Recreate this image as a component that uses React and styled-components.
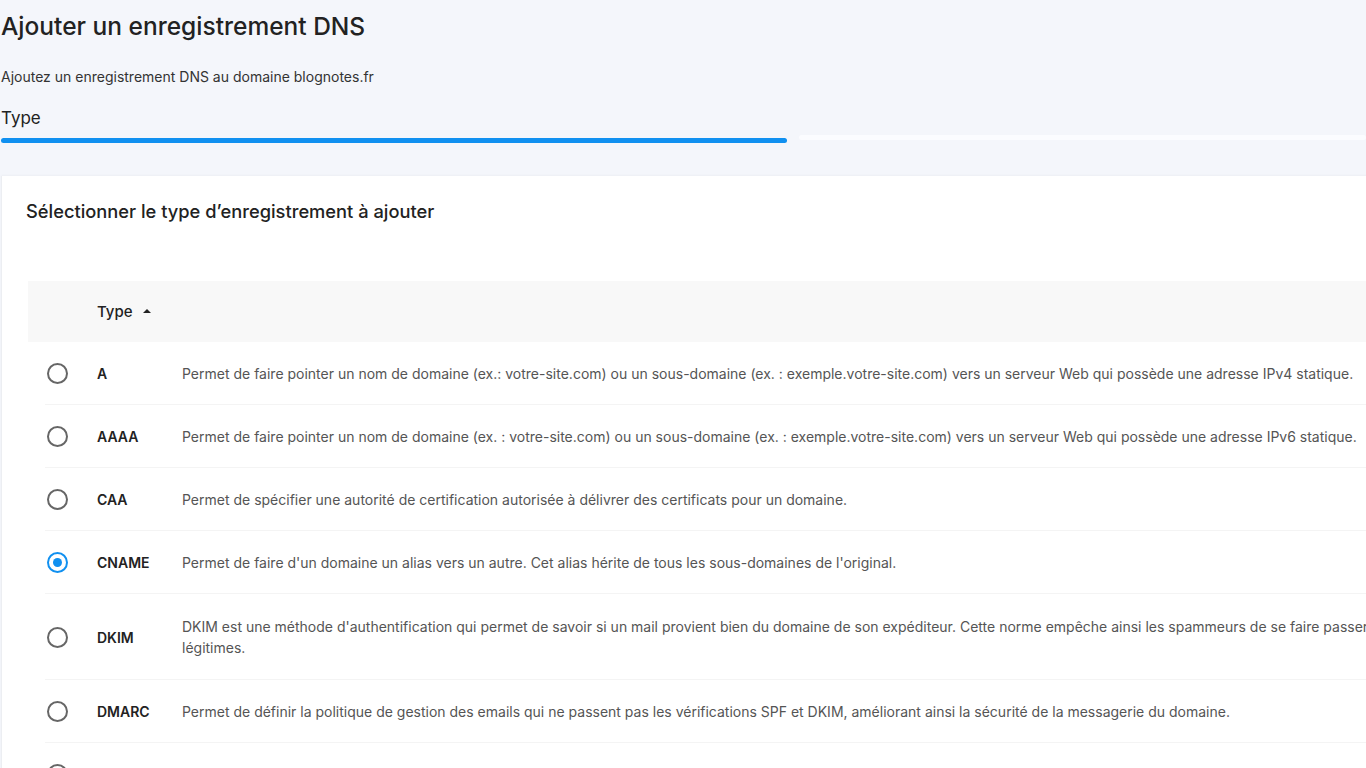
import styled, { createGlobalStyle } from 'styled-components';

const GlobalStyle = createGlobalStyle`
	html, body {
		margin: 0;
		padding: 0;
		background: #f4f6fb;
		overflow: hidden;
		font-family: Inter, 'Noto Sans', sans-serif;
		color: #222;
	}
`;

const Page = styled.div`
	width: 1640px;
	padding: 0 0 0 1px;
`;

const Title = styled.h1`
	margin: 0;
	padding-top: 11px;
	font-size: 24.5px;
	font-weight: 500;
	line-height: 30px;
	color: #222;
`;

const Subtitle = styled.p`
	margin: 27px 0 0 0;
	font-size: 14px;
	line-height: 18px;
	color: #333;
`;

const StepLabel = styled.div`
	margin-top: 20px;
	font-size: 17px;
	line-height: 24px;
	color: #222;
`;

const Progress = styled.div`
	margin-top: 5px;
	width: 1365px;
	display: flex;
	align-items: center;
	gap: 12px;
`;

const Bar = styled.div`
	height: 5px;
	border-radius: 3px;
	background: ${props => (props.active ? '#1090f0' : '#fbfcff')};
	flex: ${props => (props.active ? '0 0 786px' : '1')};
	margin-top: ${props => (props.active ? '3px' : '-3px')};
`;

const Card = styled.section`
	margin-top: 33px;
	background: #fff;
	border-left: 1px solid #eceef2;
	box-shadow: 0 -1px 2px rgba(0, 0, 0, 0.03);
	padding: 25px 0 0 24px;
	min-height: 600px;
`;

const CardTitle = styled.h2`
	margin: 0;
	font-size: 18.3px;
	font-weight: 500;
	line-height: 20px;
	color: #222;
`;

const Table = styled.div`
	margin-top: 60px;
	margin-left: 2px;
`;

const Grid = styled.div`
	display: grid;
	grid-template-columns: 69px 85px 1365px;
	align-items: center;
	min-height: ${props => props.h || 63}px;
	background: ${props => (props.head ? '#f8f8f8' : 'transparent')};
	position: relative;
	&:not(:first-child)::after {
		content: '';
		position: absolute;
		left: 17px;
		right: 0;
		bottom: 0;
		height: 1px;
		background: #f4f4f4;
	}
`;

const HeadCell = styled.div`
	grid-column: 2 / 4;
	display: flex;
	align-items: center;
	gap: 10px;
	font-size: 15px;
	font-weight: 500;
	color: #222;
`;

const SortArrow = styled.span`
	width: 0;
	height: 0;
	border-left: 4px solid transparent;
	border-right: 4px solid transparent;
	border-bottom: 4px solid #222;
	margin-top: -1px;
`;

const RadioCell = styled.div`
	padding-left: 19px;
	display: flex;
	align-items: center;
`;

const RadioRing = styled.span`
	box-sizing: border-box;
	width: 21px;
	height: 21px;
	border-radius: 50%;
	border: 2px solid ${props => (props.selected ? '#1090f0' : '#666')};
	display: flex;
	align-items: center;
	justify-content: center;
`;

const RadioDot = styled.span`
	width: 9px;
	height: 9px;
	border-radius: 50%;
	background: #1090f0;
`;

const TypeCell = styled.div`
	font-size: 14px;
	font-weight: 600;
	color: #222;
`;

const DescCell = styled.div`
	font-size: 14px;
	line-height: 21px;
	color: #555;
	padding: 10px 0;
`;

const records = [
	{
		type: 'A',
		desc: 'Permet de faire pointer un nom de domaine (ex.: votre-site.com) ou un sous-domaine (ex. : exemple.votre-site.com) vers un serveur Web qui possède une adresse IPv4 statique.',
	},
	{
		type: 'AAAA',
		desc: 'Permet de faire pointer un nom de domaine (ex. : votre-site.com) ou un sous-domaine (ex. : exemple.votre-site.com) vers un serveur Web qui possède une adresse IPv6 statique.',
	},
	{
		type: 'CAA',
		desc: 'Permet de spécifier une autorité de certification autorisée à délivrer des certificats pour un domaine.',
	},
	{
		type: 'CNAME',
		desc: "Permet de faire d'un domaine un alias vers un autre. Cet alias hérite de tous les sous-domaines de l'original.",
	},
	{
		type: 'DKIM',
		h: 86,
		desc: "DKIM est une méthode d'authentification qui permet de savoir si un mail provient bien du domaine de son expéditeur. Cette norme empêche ainsi les spammeurs de se faire passer pour des expéditeurs légitimes.",
	},
	{
		type: 'DMARC',
		desc: 'Permet de définir la politique de gestion des emails qui ne passent pas les vérifications SPF et DKIM, améliorant ainsi la sécurité de la messagerie du domaine.',
	},
	{
		type: 'MX',
		desc: 'Permet de définir les serveurs de messagerie qui reçoivent les emails du domaine.',
	},
];

const Radio = ({ selected }) => (
	<RadioRing selected={selected}>{selected && <RadioDot />}</RadioRing>
);

const App = () => {
	const selected = 'CNAME';
	return (
		<Page>
			<GlobalStyle />
			<Title>Ajouter un enregistrement DNS</Title>
			<Subtitle>Ajoutez un enregistrement DNS au domaine blognotes.fr</Subtitle>
			<StepLabel>Type</StepLabel>
			<Progress>
				<Bar active />
				<Bar />
			</Progress>
			<Card>
				<CardTitle>Sélectionner le type d’enregistrement à ajouter</CardTitle>
				<Table>
					<Grid head h={61}>
						<HeadCell>
							Type <SortArrow />
						</HeadCell>
					</Grid>
					{records.map(r => (
						<Grid key={r.type} h={r.h}>
							<RadioCell>
								<Radio selected={r.type === selected} />
							</RadioCell>
							<TypeCell>{r.type}</TypeCell>
							<DescCell>{r.desc}</DescCell>
						</Grid>
					))}
				</Table>
			</Card>
		</Page>
	);
};

export default App;
